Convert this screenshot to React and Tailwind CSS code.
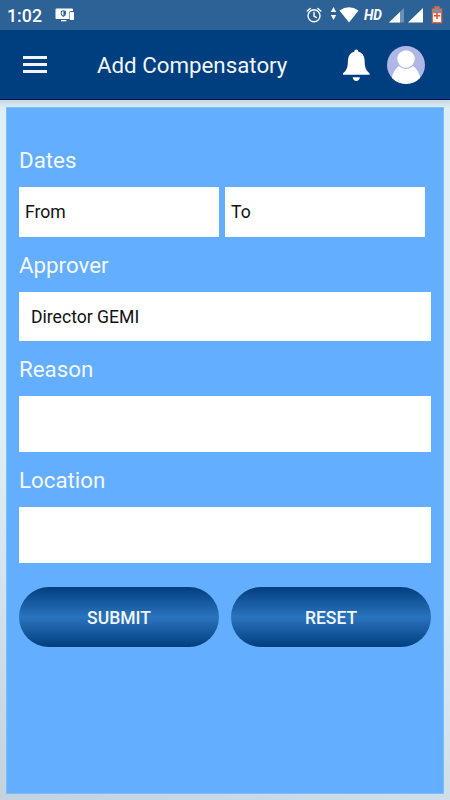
import clsx from 'clsx';

function StatusBar() {
  return (
    <div className="h-[30px] bg-[#2d6296] flex items-center justify-between pl-[7px] pr-[7px] text-white">
      <div className="flex items-center">
        <span className="w-[48px] text-[17.800px] leading-[30px] pt-[2px] font-medium">1:02</span>
        <svg width="20" height="14" viewBox="0 0 20 14" fill="#fff">
          <path d="M1.5 0.5h15.5q1 0 1 1V3h-2q-2 0-2 2v6H1.500q-1 0-1-1V1.500q0-1 1-1z" />
          <path d="M6 12h5.500v1.300H6z" />
          <rect x="14.600" y="4" width="4.400" height="8" rx="0.800" />
          <path d="M5.800 3l2.600-0.800L11 3v2.600q0 2.200-2.600 3.400Q5.800 7.800 5.800 5.600z" fill="#2d6296" />
          <path d="M8.400 3.200v4.600Q6.800 6.800 6.800 5.500V3.700z" />
        </svg>
      </div>
      <svg width="138" height="30" viewBox="305 0 138 30" fill="#fff">
        <g fill="none" stroke="#fff" strokeWidth="1.400" strokeLinecap="round">
          <circle cx="314" cy="15.700" r="6" />
          <path d="M314 12.200v3.800l2.500 1.600M307.200 11l3-2.500M320.800 11l-3-2.500" />
        </g>
        <path d="M333.500 7l2.700 5h-5.400zM333.500 20l2.700-5h-5.400z" />
        <path d="M339.500 10.500Q349 3.800 358.500 10.500L349 22.500z" />
        <text
          x="364"
          y="20"
          fontSize="15"
          fontWeight="700"
          fontStyle="italic"
          textLength="18"
          lengthAdjust="spacingAndGlyphs"
        >
          HD
        </text>
        <path d="M404 8v14.500h-15z" fillOpacity="0.300" />
        <path d="M400 12v10.500h-11z" />
        <path d="M423 8v14.500h-15z" />
        <path d="M434.300 6.300h5.400v2.200h2.500v14.800h-10.400V8.500h2.500z" fill="#e9673f" />
        <path d="M435.600 7.800h2.800v2h2.500v3.500h-7.800v-3.500h2.500z" fill="#7d8fa5" />
        <path d="M433.100 13.300h7.800v8.700h-7.800z" />
        <path d="M436.300 12.500h1.500v2.500h2.500v1.500h-2.500v2.500h-1.500v-2.500h-2.500v-1.500h2.500z" fill="#e9502a" />
      </svg>
    </div>
  );
}

function Header() {
  return (
    <header className="h-[70px] bg-[#003f7f] border-b border-[#00105c] flex items-center pl-[23px] pr-[25px]">
      <button aria-label="Menu" className="flex flex-col gap-[4px]">
        <span className="w-[24px] h-[3px] bg-[#f4f4fa]" />
        <span className="w-[24px] h-[3px] bg-[#f4f4fa]" />
        <span className="w-[24px] h-[3px] bg-[#f4f4fa]" />
      </button>
      <h1 className="ml-[50px] flex-1 text-[22.300px] text-[#f2f6fb] whitespace-nowrap pt-[3px]">Add Compensatory</h1>
      <svg width="28" height="34" viewBox="342 49 28 34" fill="#fff" className="mr-[17px] mt-[2px]">
        <path d="M354.200 51.700a2.100 2.100 0 0 1 4.200 0q5.800 1.600 6.200 8.300c0.300 6.500 0.600 10 5 13.300v1.500h-26.600v-1.500c4.400-3.300 4.700-6.800 5-13.300q0.400-6.700 6.200-8.300z" />
        <path d="M352.700 77.300h7.200q-0.600 3.800-3.600 3.800t-3.600-3.800z" />
      </svg>
      <svg width="38" height="38" viewBox="0 0 38 38">
        <defs>
          <clipPath id="avatar">
            <circle cx="19" cy="19" r="19" />
          </clipPath>
        </defs>
        <g clipPath="url(#avatar)">
          <rect width="38" height="38" fill="#b0b7e6" />
          <path d="M4.500 33Q6.500 23.500 12 20Q19 25 26 20Q31.500 23.500 33.500 33L30 38H8z" fill="#fff" />
          <circle cx="19" cy="13" r="9.300" fill="#fff" stroke="#b0b7e6" strokeWidth="1.200" />
        </g>
      </svg>
    </header>
  );
}

function Label({ children }) {
  return (
    <div className="h-[55px] flex items-center pt-[2px] text-[22.300px] text-[#f4f9ff]">
      {children}
    </div>
  );
}

function Field({ className, children }) {
  return (
    <div className={clsx('bg-white flex items-center text-[17.600px] text-[#111]', className)}>
      {children}
    </div>
  );
}

function ActionButton({ children }) {
  return (
    <button className="flex-1 h-[60px] rounded-full bg-linear-to-b from-[#003f7f] via-[#2a74be] to-[#003f7f] text-[17.500px] font-medium text-[#f2f6fc] pt-[3px]">
      {children}
    </button>
  );
}

export default function App() {
  return (
    <div className="w-[450px] h-[800px] flex flex-col overflow-hidden font-[Roboto,sans-serif]">
      <StatusBar />
      <Header />
      <div className="flex-1 bg-[linear-gradient(to_bottom,#c9d8de,transparent_8px),linear-gradient(200deg,#deeef6_58%,#c5d2e0_98%)]">
        <main className="mt-[7px] mx-[6px] h-[687px] bg-[#63aeff] border border-[#7dbcff] pt-[24px] px-[12px]">
          <Label>Dates</Label>
          <div className="flex gap-[6px]">
            <Field className="w-[200px] h-[50px] pl-[6px]">From</Field>
            <Field className="w-[200px] h-[50px] pl-[6px]">To</Field>
          </div>
          <Label>Approver</Label>
          <Field className="h-[49px] pl-[12px] pt-[2px]">Director GEMI</Field>
          <Label>Reason</Label>
          <Field className="h-[56px]" />
          <Label>Location</Label>
          <Field className="h-[56px]" />
          <div className="flex gap-[12px] mt-[24px]">
            <ActionButton>SUBMIT</ActionButton>
            <ActionButton>RESET</ActionButton>
          </div>
        </main>
      </div>
    </div>
  );
}
